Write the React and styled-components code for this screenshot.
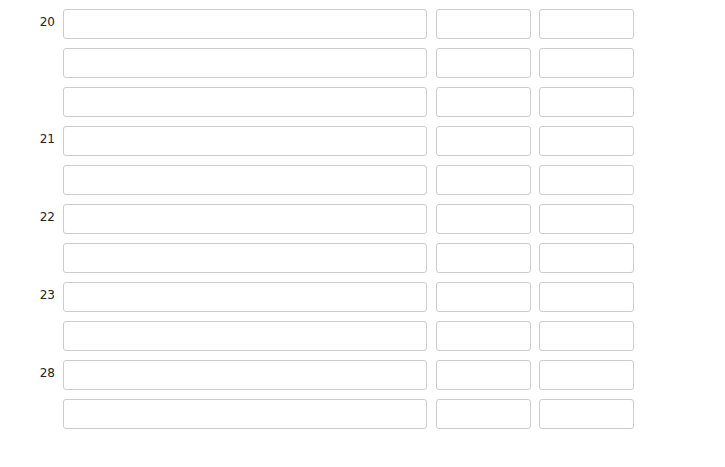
import React from 'react'
import styled, { createGlobalStyle } from 'styled-components'

const GlobalStyle = createGlobalStyle`
  html, body {
    margin: 0;
    padding: 0;
    background: #fff;
  }
  body {
    font-family: Tahoma, "DejaVu Sans", sans-serif;
    font-size: 12px;
    color: #222;
  }
`

const rows = [
  { num: '20' },
  { num: '' },
  { num: '' },
  { num: '21' },
  { num: '' },
  { num: '22' },
  { num: '' },
  { num: '23' },
  { num: '' },
  { num: '28' },
  { num: '' },
]

function App() {
  return (
    <>
      <GlobalStyle />
      <Form>
        {rows.map((r, i) => (
          <Row key={i}>
            <Num>{r.num}</Num>
            <Field type="text" $width={364} />
            <Field type="text" $width={95} $gap={9} />
            <Field type="text" $width={95} $gap={8} />
          </Row>
        ))}
      </Form>
    </>
  )
}

export default App

const Form = styled.div`
  display: flex;
  flex-direction: column;
  gap: 9px;
  padding-top: 9px;
`

const Row = styled.div`
  display: flex;
  align-items: flex-start;
  height: 30px;
`

const Num = styled.div`
  width: 55px;
  padding-top: 6px;
  text-align: right;
  line-height: 14px;
  margin-right: 8px;
  flex-shrink: 0;
`

const Field = styled.input`
  box-sizing: border-box;
  width: ${p => p.$width}px;
  height: 30px;
  margin: 0 0 0 ${p => p.$gap || 0}px;
  padding: 0 4px;
  border: 1px solid #cccccc;
  border-radius: 3px;
  background: #fff;
  outline: none;
  flex-shrink: 0;
`
